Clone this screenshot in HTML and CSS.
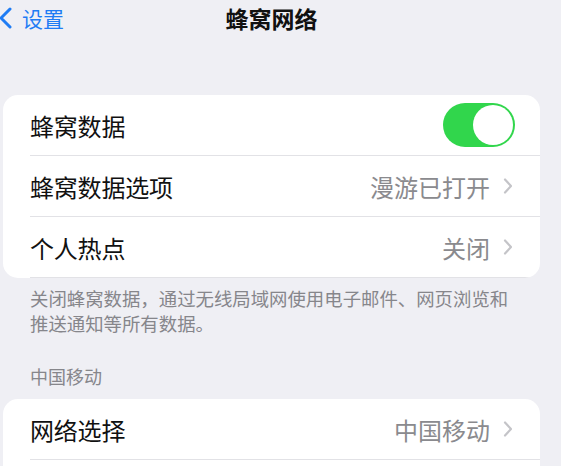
FILE: index.html
```html
<!DOCTYPE html>
<html lang="zh-CN">
<head>
  <meta charset="UTF-8" />
  <meta name="viewport" content="width=device-width, initial-scale=1" />
  <title>蜂窝网络</title>
  <link rel="stylesheet" href="styles.css">
</head>
<body>

<div class="nav">
  <a class="back" href="#">
    <svg class="back-icon" width="13" height="22" viewBox="0 0 13 22">
      <path d="M11 2 L2 11 L11 20" fill="none" stroke="#1f7cf4" stroke-width="3" stroke-linecap="round" stroke-linejoin="round"/>
    </svg>
    <span>设置</span>
  </a>
  <div class="nav-title">蜂窝网络</div>
  <div></div>
</div>

<div class="group">
  <div class="row">
    <div class="label">蜂窝数据</div>
    <div class="switch on"><div class="knob"></div></div>
  </div>
  <div class="row">
    <div class="label">蜂窝数据选项</div>
    <div class="value">漫游已打开
      <svg class="chev" width="10" height="16" viewBox="0 0 10 16"><path d="M2 1.5 L8 8 L2 14.5" fill="none" stroke="#c4c4c8" stroke-width="2.2" stroke-linecap="round" stroke-linejoin="round"/></svg>
    </div>
  </div>
  <div class="row">
    <div class="label">个人热点</div>
    <div class="value">关闭
      <svg class="chev" width="10" height="16" viewBox="0 0 10 16"><path d="M2 1.5 L8 8 L2 14.5" fill="none" stroke="#c4c4c8" stroke-width="2.2" stroke-linecap="round" stroke-linejoin="round"/></svg>
    </div>
  </div>
</div>

<div class="footer">关闭蜂窝数据，通过无线局域网使用电子邮件、网页浏览和推送通知等所有数据。</div>

<div class="section-title">中国移动</div>

<div class="group">
  <div class="row">
    <div class="label">网络选择</div>
    <div class="value">中国移动
      <svg class="chev" width="10" height="16" viewBox="0 0 10 16"><path d="M2 1.5 L8 8 L2 14.5" fill="none" stroke="#c4c4c8" stroke-width="2.2" stroke-linecap="round" stroke-linejoin="round"/></svg>
    </div>
  </div>
  <div class="row"></div>
</div>

</body>
</html>
```

FILE: styles.css
```css
* {
  margin: 0; padding: 0; box-sizing: border-box;
  font-family: "Noto Sans CJK SC", "Noto Sans", sans-serif;
}
body {
  background-color: #efeff4;
  color: #111;
  overflow: hidden;
}
.nav {
  height: 36px;
  display: grid;
  grid-template-columns: 1fr auto 1fr;
  align-items: center;
  margin-bottom: 59px;
}
.back {
  display: flex;
  align-items: center;
  color: #1f7cf4;
  text-decoration: none;
  font-size: 21px;
}
.back-icon {
  margin-left: -1px;
  margin-right: 10px;
}
.nav-title {
  font-size: 23px;
  font-weight: 700;
  color: #111;
  padding-right: 18px;
}
.group {
  margin-left: 3px;
  width: 537px;
  background: white;
  border-radius: 15px;
  overflow: hidden;
}
.row {
  height: 61px;
  margin-left: 27px;
  padding-right: 25px;
  display: flex;
  align-items: center;
  justify-content: space-between;
  border-bottom: 1px solid #e2e2e6;
}
.label {
  font-size: 24px;
  letter-spacing: -0.2px;
}
.value {
  display: flex;
  align-items: center;
  font-size: 24px;
  color: #8a8a8e;
  padding-right: 2px;
}
.chev {
  margin-left: 13px;
}
.switch {
  width: 72px;
  height: 44px;
  border-radius: 22px;
  background: #31d64c;
  padding: 2px;
  display: flex;
  justify-content: flex-end;
}
.knob {
  width: 40px;
  height: 40px;
  border-radius: 50%;
  background: white;
}
.footer {
  width: 485px;
  margin-left: 30px;
  padding-top: 8px;
  font-size: 18.4px;
  line-height: 25px;
  color: #86868b;
}
.section-title {
  margin-left: 30px;
  margin-top: 28px;
  margin-bottom: 10px;
  font-size: 18px;
  line-height: 25px;
  color: #86868b;
}
```
